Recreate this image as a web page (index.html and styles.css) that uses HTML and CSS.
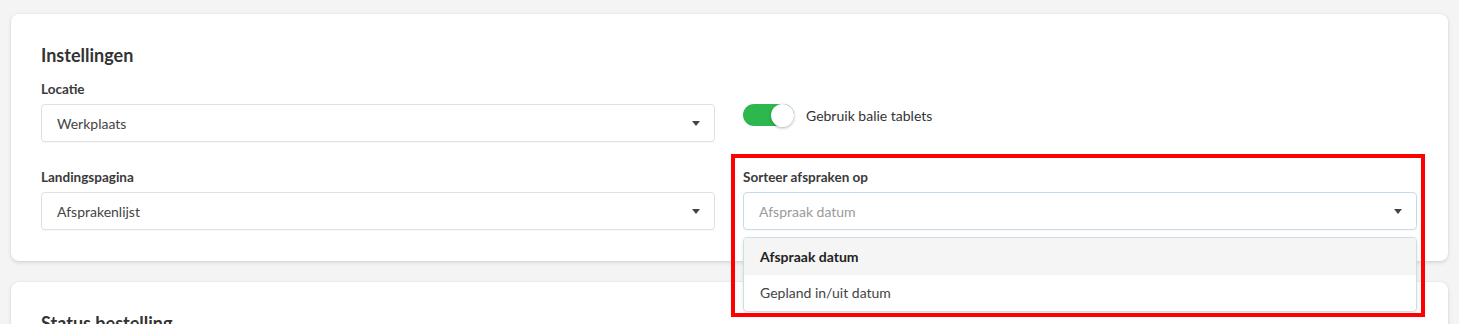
FILE: index.html
```html
<!DOCTYPE html>
<html lang="nl">
<head>
<meta charset="utf-8">
<title>Instellingen</title>
<link rel="stylesheet" href="styles.css">
</head>
<body>
<div class="page">
  <section class="card">
    <h2 class="card-title">Instellingen</h2>
    <div class="grid">
      <div class="field">
        <label class="label">Locatie</label>
        <div class="select">
          <span class="value">Werkplaats</span>
          <span class="caret"></span>
        </div>
      </div>
      <div class="field">
        <div class="toggle-row">
          <span class="switch"><span class="knob"></span></span>
          <span class="toggle-label">Gebruik balie tablets</span>
        </div>
      </div>
      <div class="field">
        <label class="label">Landingspagina</label>
        <div class="select">
          <span class="value">Afsprakenlijst</span>
          <span class="caret"></span>
        </div>
      </div>
      <div class="field field-open">
        <label class="label">Sorteer afspraken op</label>
        <div class="select select-focus">
          <span class="value placeholder">Afspraak datum</span>
          <span class="caret"></span>
        </div>
        <ul class="menu">
          <li class="option option-active">Afspraak datum</li>
          <li class="option">Gepland in/uit datum</li>
        </ul>
        <div class="highlight"></div>
      </div>
    </div>
  </section>
  <section class="card">
    <h2 class="card-title">Status bestelling</h2>
    <div class="spacer"></div>
  </section>
</div>
</body>
</html>
```

FILE: styles.css
```css
* { box-sizing: border-box; }
html, body {
  margin: 0;
  padding: 0;
  background: #f4f4f4;
  font-family: Lato, "Open Sans", "Liberation Sans", sans-serif;
  color: #333;
  overflow: hidden;
}
.page {
  padding: 14px 11px;
  display: flex;
  flex-direction: column;
  gap: 21px;
}
.card {
  background: #fff;
  border-radius: 8px;
  box-shadow: 0 0 2px rgba(0,0,0,0.10), 0 2px 4px rgba(0,0,0,0.10);
  padding: 30px 31px 31px 30px;
}
.card-title {
  margin: 0 0 15px 0;
  font-size: 18px;
  line-height: 22px;
  font-weight: 700;
  color: #333;
}
.grid {
  display: grid;
  grid-template-columns: 1fr 1fr;
  column-gap: 28px;
  row-gap: 27px;
}
.field {
  position: relative;
  display: flex;
  flex-direction: column;
}
.label {
  display: block;
  font-size: 13.5px;
  line-height: 16px;
  font-weight: 700;
  color: #3a3a3a;
  margin-bottom: 7px;
}
.select {
  position: relative;
  height: 38px;
  border: 1px solid #e1e1e1;
  border-radius: 4px;
  background: #fff;
  display: flex;
  align-items: center;
  justify-content: space-between;
  padding: 0 14px 0 15px;
  box-shadow: 0 1px 1px rgba(0,0,0,0.03);
}
.select-focus {
  border-color: #c3dde8;
}
.value {
  font-size: 14px;
  color: #444;
}
.placeholder { color: #9a9a9a; }
.caret {
  width: 0;
  height: 0;
  border-left: 4.5px solid transparent;
  border-right: 4.5px solid transparent;
  border-top: 5px solid #444;
}
.toggle-row {
  margin-top: 23px;
  display: flex;
  align-items: center;
  gap: 12px;
  height: 22px;
}
.switch {
  width: 51px;
  height: 22px;
  border-radius: 11px;
  background: #2db84d;
  display: flex;
  justify-content: flex-end;
  align-items: center;
}
.knob {
  width: 23px;
  height: 23px;
  border-radius: 50%;
  background: #fff;
  box-shadow: 0 1px 3px rgba(0,0,0,0.3);
}
.toggle-label {
  font-size: 14px;
  color: #333;
}
.menu {
  position: absolute;
  z-index: 5;
  left: 0;
  right: 0;
  top: 68px;
  margin: 0;
  padding: 0;
  list-style: none;
  background: #fff;
  border: 1px solid #c9dfe8;
  border-radius: 4px;
  box-shadow: 0 2px 4px rgba(0,0,0,0.08);
  overflow: hidden;
}
.option {
  height: 36.5px;
  display: flex;
  align-items: center;
  padding-left: 16px;
  font-size: 14px;
  color: #444;
}
.option-active {
  background: #f5f5f5;
  font-weight: 700;
  color: #222;
}
.highlight {
  position: absolute;
  z-index: 6;
  left: -12px;
  right: -8px;
  top: -15px;
  height: 163px;
  border: 4px solid #ff0000;
  pointer-events: none;
}
.spacer { height: 60px; }
```
